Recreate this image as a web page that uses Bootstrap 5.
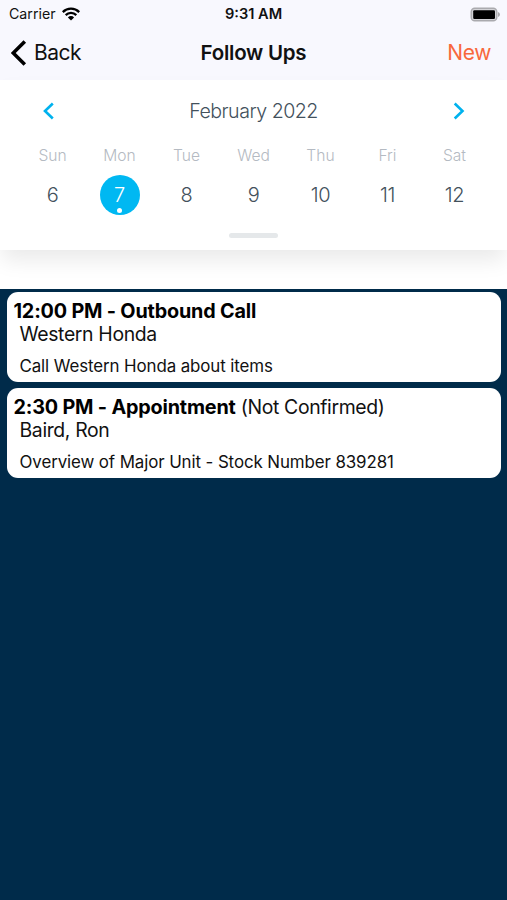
<!DOCTYPE html>
<html lang="en">
<head>
<meta charset="utf-8">
<meta name="viewport" content="width=device-width, initial-scale=1">
<title>Follow Ups</title>
<link href="https://cdn.jsdelivr.net/npm/bootstrap@5.3.0/dist/css/bootstrap.min.css" rel="stylesheet">
<style>
  body { font-family: Inter, "Liberation Sans", sans-serif; background: #002b4a; color: #111; overflow: hidden; }
  .thirds { display: grid; grid-template-columns: 1fr auto 1fr; align-items: center; }
  .app-header { background: #f8f8fe; height: 80px; }
  .status-row { height: 27px; padding: 0 6px 0 9px; font-size: 14.2px; line-height: 28px; }
  .status-time { font-weight: 600; font-size: 14.6px; padding-right: 3px; }
  .title-row { height: 52px; padding: 0 16px 0 11px; font-size: 21px; line-height: 52px; }
  .page-title { font-weight: 600; font-size: 20.5px; letter-spacing: -.25px; padding-left: 5px; }
  .back-link { color: #111; gap: 7px; letter-spacing: -.5px; }
  .new-link { color: #f8683c; font-weight: 400; letter-spacing: -.35px; }
  .calendar { height: 170px; box-shadow: 0 12px 20px -2px rgba(0,0,0,.085); color: #43515c; }
  .calendar-area { height: 289px; }
  .month-row { height: 62px; padding: 0 42px; font-size: 19.6px; }
  .month-name { font-weight: 350; letter-spacing: -.5px; padding: 1px 0 0; }
  .week-grid { display: grid; grid-template-columns: repeat(7, 67px); justify-content: center; text-align: center; }
  .day-name { font-size: 15.6px; font-weight: 350; line-height: 28px; color: #b4bac2; }
  .day-num { width: 40px; height: 40px; margin: 5px auto 0; font-size: 20px; font-weight: 350; line-height: 41px; letter-spacing: -.3px; }
  .day-num.picked { background: #00b8f2; color: #fff; font-weight: 300; border-radius: 50%; }
  .event-dot { width: 5px; height: 5px; background: #fff; bottom: 2px; left: 17.5px; }
  .grabber { width: 49px; height: 5px; border-radius: 3px; background: #e5e8ea; margin: 18px auto 0; }
  .agenda { padding: 3.4px 6px 0 7px; gap: 6px; }
  .followup { height: 90px; border-radius: 11px; padding: 6.6px 6px 0; }
  .followup-head { font-size: 19.4px; line-height: 24px; color: #111; letter-spacing: -.35px; padding-left: .5px; white-space: nowrap; }
  .followup-head b { font-size: 19.8px; font-weight: 700; color: #000; letter-spacing: -.18px; }
  .followup-who { font-size: 19.4px; line-height: 22px; padding-left: 6.5px; letter-spacing: -.35px; }
  .followup-note { font-size: 16.9px; line-height: 22px; padding: 10px 0 0 6.5px; letter-spacing: -.1px; }
  .wifi { margin-left: -2px; }
</style>
<script src="https://cdn.jsdelivr.net/npm/bootstrap@5.3.0/dist/js/bootstrap.bundle.min.js"></script>
</head>
<body>
<div class="calendar-area bg-white overflow-hidden">
  <header class="app-header">
    <div class="status-row thirds">
      <div class="d-flex align-items-center gap-2">
        <span class="status-carrier">Carrier</span>
        <svg class="wifi" width="18" height="14" viewBox="0 0 18 14"><g fill="none" stroke="#000" stroke-width="2.3"><path d="M.8 5.1a11.6 11.6 0 0 1 16.4 0"/><path d="M3.7 8.1a7.5 7.5 0 0 1 10.6 0"/></g><path d="M5.9 10.4a4.4 4.4 0 0 1 6.2 0L9 13.5z"/></svg>
      </div>
      <span class="status-time">9:31 AM</span>
      <svg class="ms-auto" width="32" height="15" viewBox="0 0 32 15"><rect x="2.2" y="1.2" width="25.6" height="12.6" rx="3.6" fill="#d2d2d6" stroke="#aaaaae" stroke-width="1.4"/><rect x="4.2" y="3.2" width="21.8" height="8.8" rx="1.2"/><path d="M29 5v5q2-.8 2-2.5t-2-2.5" fill="#aaaaae"/></svg>
    </div>
    <nav class="title-row thirds">
      <a href="#" class="back-link d-flex align-items-center text-decoration-none">
        <svg width="16" height="26" viewBox="0 0 16 26"><path d="M13.8 1.5 2.2 13l11.6 11.5" fill="none" stroke="#000" stroke-width="3.6"/></svg>
        <span>Back</span>
      </a>
      <span class="page-title">Follow Ups</span>
      <a href="#" class="new-link ms-auto text-decoration-none">New</a>
    </nav>
  </header>
  <section class="calendar bg-white">
    <div class="month-row thirds">
      <svg width="13" height="18" viewBox="0 0 13 18"><path d="M10.8 1.5 3 9l7.8 7.5" fill="none" stroke="#00b2ee" stroke-width="2.6"/></svg>
      <span class="month-name">February 2022</span>
      <svg class="ms-auto" width="13" height="18" viewBox="0 0 13 18"><path d="M2.7 1.5 10.5 9l-7.8 7.5" fill="none" stroke="#00b2ee" stroke-width="2.6"/></svg>
    </div>
    <div class="week-grid">
      <div><div class="day-name">Sun</div><div class="day-num">6</div></div>
      <div><div class="day-name">Mon</div><div class="day-num picked position-relative">7<span class="event-dot position-absolute rounded-circle"></span></div></div>
      <div><div class="day-name">Tue</div><div class="day-num">8</div></div>
      <div><div class="day-name">Wed</div><div class="day-num">9</div></div>
      <div><div class="day-name">Thu</div><div class="day-num">10</div></div>
      <div><div class="day-name">Fri</div><div class="day-num">11</div></div>
      <div><div class="day-name">Sat</div><div class="day-num">12</div></div>
    </div>
    <div class="grabber"></div>
  </section>
</div>
<main class="agenda d-flex flex-column">
  <article class="followup bg-white">
    <div class="followup-head"><b>12:00 PM - Outbound Call</b></div>
    <div class="followup-who">Western Honda</div>
    <div class="followup-note">Call Western Honda about items</div>
  </article>
  <article class="followup bg-white">
    <div class="followup-head"><b>2:30 PM - Appointment</b> (Not Confirmed)</div>
    <div class="followup-who">Baird, Ron</div>
    <div class="followup-note">Overview of Major Unit - Stock Number 839281</div>
  </article>
</main>
</body>
</html>
